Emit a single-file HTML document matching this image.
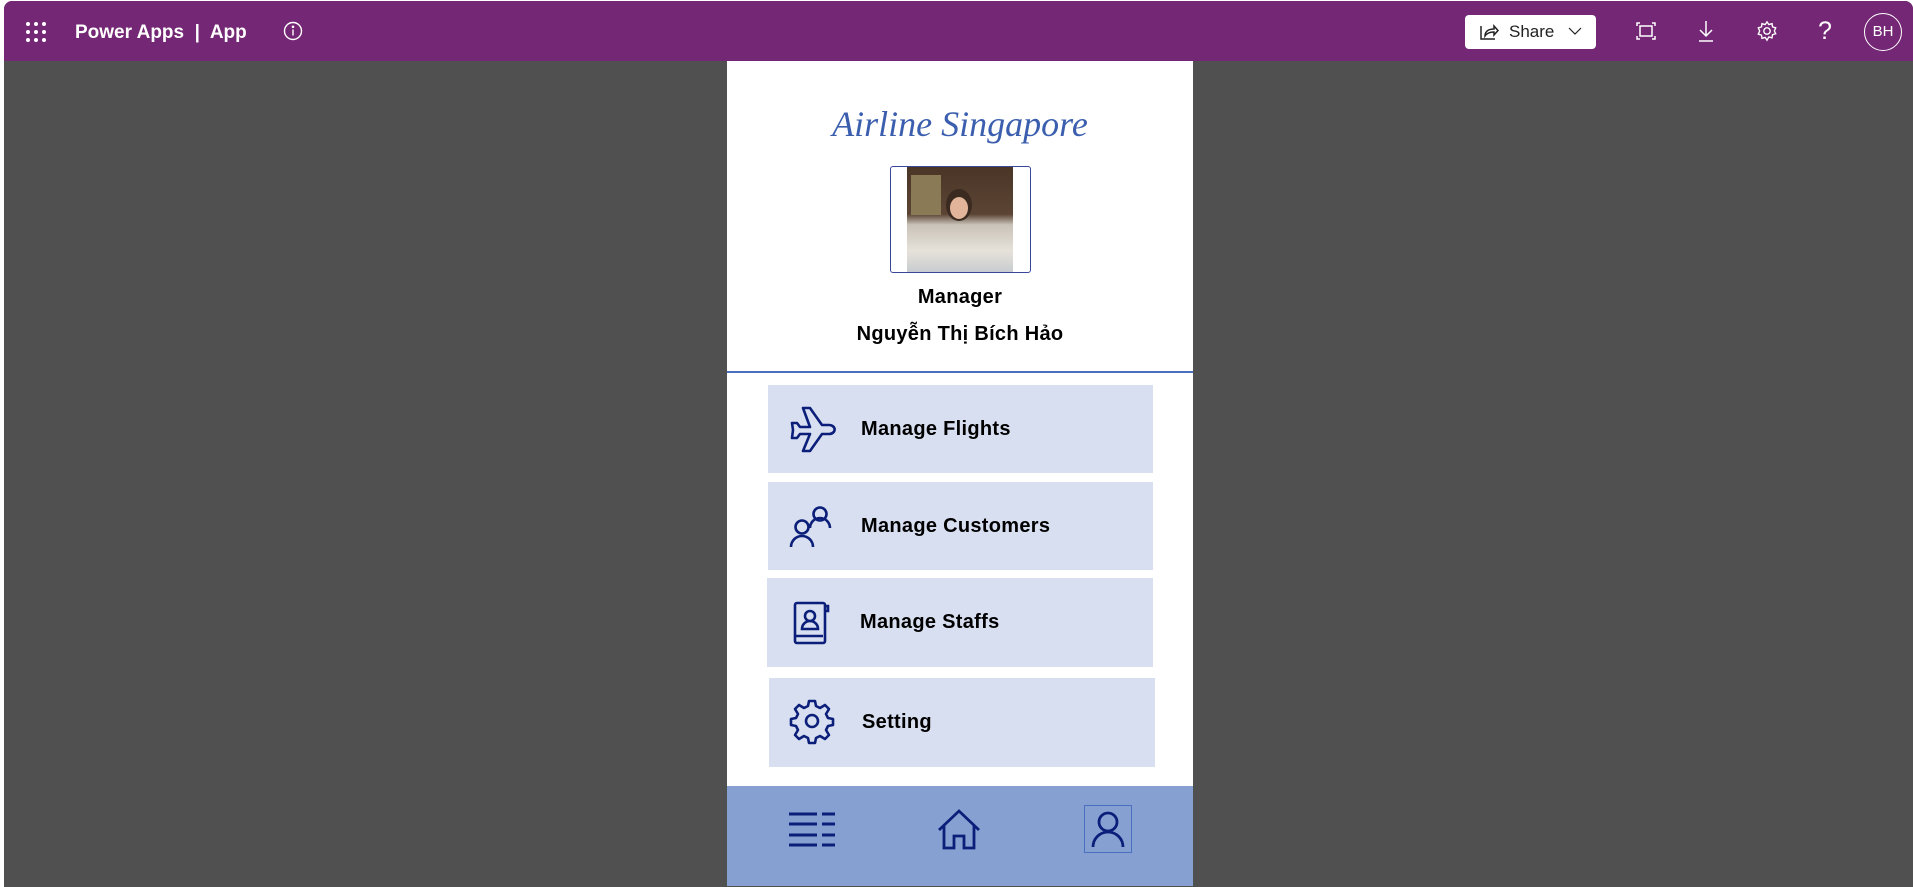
<!DOCTYPE html>
<html><head><meta charset="utf-8"><style>
*{margin:0;padding:0;box-sizing:border-box}
body{width:1913px;height:887px;background:#fff;position:relative;overflow:hidden;font-family:"Liberation Sans",sans-serif}
#frame{position:absolute;left:4px;top:1px;width:1909px;height:886px;background:#505050;border-radius:8px 8px 0 0;overflow:hidden}
#top{position:absolute;left:0;top:0;width:100%;height:60px;background:#742774;color:#fff}
.abs{position:absolute}
#canvas{position:absolute;left:723px;top:60px;width:466px;height:825px;background:#fff}
.btn{position:absolute;background:#d8dff0}
.btn span{position:absolute;left:93px;top:0;line-height:88px;font-size:20px;font-weight:bold;color:#000;font-family:"Liberation Sans",sans-serif;letter-spacing:.3px}
.btn svg{position:absolute;left:20px;top:20px}
</style></head><body>
<div id="frame">
<div id="top">
 <svg class="abs" style="left:21px;top:20px" width="22" height="22" viewBox="0 0 22 22" fill="#fff">
  <circle cx="3" cy="3" r="2"/><circle cx="11" cy="3" r="2"/><circle cx="19" cy="3" r="2"/>
  <circle cx="3" cy="11" r="2"/><circle cx="11" cy="11" r="2"/><circle cx="19" cy="11" r="2"/>
  <circle cx="3" cy="19" r="2"/><circle cx="11" cy="19" r="2"/><circle cx="19" cy="19" r="2"/></svg>
 <div class="abs" style="left:71px;top:21px;font-size:19px;font-weight:bold;white-space:nowrap">Power Apps &nbsp;|&nbsp; App</div>
 <svg class="abs" style="left:279px;top:20px" width="20" height="20" viewBox="0 0 20 20" fill="none" stroke="#fff" stroke-width="1.4"><circle cx="10" cy="10" r="8.5"/><line x1="10" y1="8.5" x2="10" y2="14.5"/><circle cx="10" cy="5.8" r=".6" fill="#fff"/></svg>
 <div class="abs" style="left:1461px;top:14px;width:131px;height:34px;background:#fff;border-radius:4px;color:#222">
  <svg class="abs" style="left:14px;top:8px" width="20" height="18" viewBox="0 0 20 18" fill="none" stroke="#222" stroke-width="1.5"><path d="M2 3v13h14"/><path d="M6 13c0-5 4-7 9-7V3l4 4.5-4 4.5V9c-4 0-7 1-9 4z"/></svg>
  <span class="abs" style="left:44px;top:7px;font-size:17px">Share</span>
  <svg class="abs" style="left:103px;top:12px" width="14" height="9" viewBox="0 0 14 9" fill="none" stroke="#222" stroke-width="1.2"><path d="M1 1l6 6 6-6"/></svg>
 </div>
 <svg class="abs" style="left:1632px;top:21px" width="20" height="18" viewBox="0 0 20 18" fill="none" stroke="#fff" stroke-width="1.5"><rect x="4" y="4" width="12" height="10"/><path d="M1 4V1h3M16 1h3v3M19 14v3h-3M4 17H1v-3"/></svg>
 <svg class="abs" style="left:1694px;top:18px" width="16" height="24" viewBox="0 0 16 24" fill="none" stroke="#fff" stroke-width="1.5"><path d="M8 2v15M2 11l6 6 6-6M1 22h14"/></svg>
 <svg class="abs" style="left:1752px;top:19px" width="22" height="22" viewBox="0 0 24 24" fill="none" stroke="#fff" stroke-width="1.5"><circle cx="12" cy="12" r="3.5"/><path d="M12 2l2 3 3.5-1 .5 3.5 3.5 1-1.5 3.5 1.5 3-3.5 1-.5 3.5-3.5-1L12 22l-2-3-3.5 1L6 16.5l-3.5-1L4 12 2.5 8.5 6 7.5 6.5 4 10 5z"/></svg>
 <div class="abs" style="left:1814px;top:16px;font-size:25px;font-weight:300">?</div>
 <div class="abs" style="left:1860px;top:12px;width:38px;height:38px;border:1.3px solid #fff;border-radius:50%;text-align:center;line-height:36px;font-size:15px">BH</div>
</div>

<div id="canvas">
 <div class="abs" style="left:0;top:42px;width:466px;text-align:center;font-family:'Liberation Serif',serif;font-style:italic;font-size:36px;color:#3b5fae">Airline Singapore</div>
 <div class="abs" style="left:163px;top:105px;width:141px;height:107px;border:1.5px solid #3a469a;border-radius:3px;overflow:hidden">
  <div class="abs" style="left:16px;top:0;width:106px;height:105px;background:linear-gradient(180deg,#4a3526 0%,#5b4434 45%,#c9c2b8 55%,#e6e2da 80%,#c8ccd0 100%)"></div>
  <div class="abs" style="left:20px;top:8px;width:30px;height:40px;background:#8a7a55"></div>
  <div class="abs" style="left:55px;top:22px;width:26px;height:32px;border-radius:50%;background:#3a2a20"></div>
  <div class="abs" style="left:59px;top:30px;width:18px;height:22px;border-radius:50%;background:#e2b59a"></div>
 </div>
 <div class="abs" style="left:0;top:225px;width:466px;text-align:center;font-size:20px;font-weight:bold;letter-spacing:.3px">Manager</div>
 <div class="abs" style="left:0;top:262px;width:466px;text-align:center;font-size:20px;font-weight:bold;letter-spacing:.3px">Nguyễn Thị Bích Hảo</div>
 <div class="abs" style="left:0;top:310px;width:466px;height:1.5px;background:#4a6fbf"></div>

 <div class="btn" style="left:41px;top:324px;width:385px;height:88px">
  <svg width="50" height="50" viewBox="0 0 50 50" fill="none" stroke="#0b1f7a" stroke-width="2.6" stroke-linejoin="round"><path d="M15 3h7l12 17h7a5 4 0 0 1 0 9h-7L22 46h-7l7-17H12l-3 4H4l1-8-1-7h5l3 4h10z"/></svg>
  <span>Manage Flights</span></div>
 <div class="btn" style="left:41px;top:421px;width:385px;height:88px">
  <svg width="50" height="50" viewBox="0 0 50 50" fill="none" stroke="#0b1f7a" stroke-width="2.6"><circle cx="32" cy="12" r="6.5"/><path d="M22 26a10 10 0 0 1 20 0"/><circle cx="14" cy="25" r="6.5"/><path d="M3 45a11 11 0 0 1 22 0"/></svg>
  <span>Manage Customers</span></div>
 <div class="btn" style="left:40px;top:517px;width:386px;height:89px">
  <svg width="50" height="50" viewBox="0 0 50 50" fill="none" stroke="#0b1f7a" stroke-width="2.6"><rect x="8" y="5" width="30" height="40" rx="2"/><path d="M8 38h28M38 8h3v5h-3"/><circle cx="23" cy="18" r="5"/><path d="M15 31a8 8 0 0 1 16 0z"/></svg>
  <span>Manage Staffs</span></div>
 <div class="btn" style="left:42px;top:617px;width:386px;height:89px">
  <svg width="50" height="50" viewBox="0 0 50 50" fill="none" stroke="#0b1f7a" stroke-width="2.6" stroke-linejoin="round"><circle cx="23" cy="23" r="6"/><path d="M20 3h6l1 5 4 2 5-3 4 4-3 5 2 4 5 1v6l-5 1-2 4 3 5-4 4-5-3-4 2-1 5h-6l-1-5-4-2-5 3-4-4 3-5-2-4-5-1v-6l5-1 2-4-3-5 4-4 5 3 4-2z"/></svg>
  <span>Setting</span></div>

 <div class="abs" style="left:0;top:725px;width:466px;height:100px;background:#87a0d2">
  <svg class="abs" style="left:61px;top:26px" width="48" height="36" viewBox="0 0 48 36" stroke="#0b1f7a" stroke-width="3"><path d="M1 2h28M1 12h28M1 23h28M1 33h28M34 2h13M34 12h13M34 23h13M34 33h13"/></svg>
  <svg class="abs" style="left:210px;top:23px" width="44" height="42" viewBox="0 0 44 42" fill="none" stroke="#0b1f7a" stroke-width="2.8"><path d="M2 21L22 2l20 19M7 17v22h10V27h10v12h10V17"/></svg>
  <div class="abs" style="left:357px;top:19px;width:48px;height:48px;border:1.5px solid #4a6fbf">
   <svg width="46" height="46" viewBox="0 0 46 46" fill="none" stroke="#0b1f7a" stroke-width="2.8"><circle cx="23" cy="16" r="9"/><path d="M8 41a15 15 0 0 1 30 0"/></svg>
  </div>
 </div>
</div>
</div>
</body></html>
